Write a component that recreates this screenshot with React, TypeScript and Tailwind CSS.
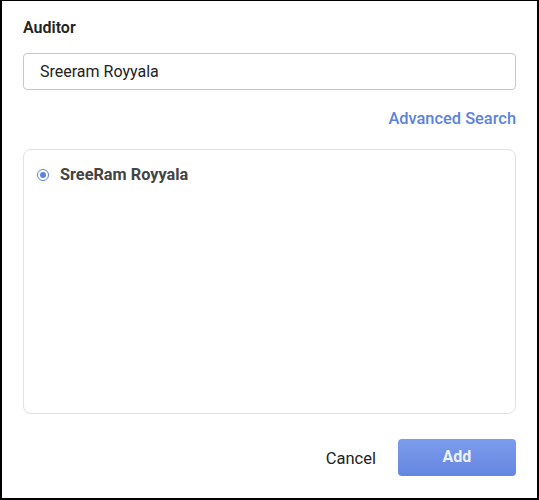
export default function App() {
	return (
		<div className="h-[500px] w-[539px] bg-white font-['Roboto',sans-serif]">
			<div className="flex h-full flex-col border-t border-r-2 border-b-2 border-l-2 border-black px-[21px] pt-[17px] pb-[22px]">
				<label className="text-[16px] font-semibold leading-5 text-[#222]">Auditor</label>
				<div className="mt-[15px] flex h-[37px] items-center rounded-[4px] border border-[#c7c7c7] px-[16px]">
					<span className="text-[16px] text-[#222]">Sreeram Royyala</span>
				</div>
				<div className="mt-[17px] flex justify-end">
					<a className="text-[16.4px] font-medium text-[#5b82e0]" href="#">
						Advanced Search
					</a>
				</div>
				<div className="mt-[17px] flex-1 rounded-[8px] border border-[#e2e2e2] px-[13px] pt-[13px]">
					<label className="flex items-center gap-[11px]">
						<span className="flex h-[12px] w-[12px] items-center justify-center rounded-full border-[1.5px] border-[#5b82e0]">
							<span className="h-[6px] w-[6px] rounded-full bg-[#5b82e0]" />
						</span>
						<span className="text-[16.3px] font-bold text-[#444]">SreeRam Royyala</span>
					</label>
				</div>
				<div className="mt-[25px] flex items-center justify-end gap-[22px]">
					<button className="pt-[4px] text-[16.5px] font-normal text-[#222]">Cancel</button>
					<button className="h-[37px] w-[118px] rounded-[4px] bg-gradient-to-b from-[#7c9ced] to-[#6586e0] pb-[2px] text-[16px] font-bold text-[#eef2ff]">
						Add
					</button>
				</div>
			</div>
		</div>
	);
}
